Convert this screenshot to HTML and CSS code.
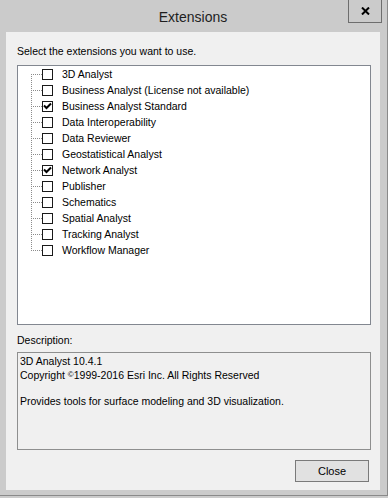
FILE: index.html
```html
<!DOCTYPE html>
<html lang="en">
<head>
<meta charset="UTF-8">
<meta name="viewport" content="width=device-width, initial-scale=1.0">
<title>Extensions</title>
<link rel="stylesheet" href="styles.css">
</head>
<body>
    <div class="window">
        <header class="titlebar">
            <span></span>
            <h1 class="title">Extensions</h1>
            <button class="close-x" aria-label="Close">
                <svg width="9" height="8" viewBox="0 0 9 8"><path d="M1 0.5 L8 7.5 M8 0.5 L1 7.5" stroke="#000" stroke-width="2"/></svg>
            </button>
        </header>
        <main class="client">
            <p class="label">Select the extensions you want to use.</p>
            <!-- 확장 목록 -->
            <ul class="ext-list">
                <li class="ext first"><span class="branch"></span><span class="box"></span><span class="name">3D Analyst</span></li>
                <li class="ext"><span class="branch"></span><span class="box"></span><span class="name">Business Analyst (License not available)</span></li>
                <li class="ext"><span class="branch"></span><span class="box checked"></span><span class="name">Business Analyst Standard</span></li>
                <li class="ext"><span class="branch"></span><span class="box"></span><span class="name">Data Interoperability</span></li>
                <li class="ext"><span class="branch"></span><span class="box"></span><span class="name">Data Reviewer</span></li>
                <li class="ext"><span class="branch"></span><span class="box"></span><span class="name">Geostatistical Analyst</span></li>
                <li class="ext"><span class="branch"></span><span class="box checked"></span><span class="name">Network Analyst</span></li>
                <li class="ext"><span class="branch"></span><span class="box"></span><span class="name">Publisher</span></li>
                <li class="ext"><span class="branch"></span><span class="box"></span><span class="name">Schematics</span></li>
                <li class="ext"><span class="branch"></span><span class="box"></span><span class="name">Spatial Analyst</span></li>
                <li class="ext"><span class="branch"></span><span class="box"></span><span class="name">Tracking Analyst</span></li>
                <li class="ext last"><span class="branch"></span><span class="box"></span><span class="name">Workflow Manager</span></li>
            </ul>
            <p class="label desc-label">Description:</p>
            <div class="description">
                <p>3D Analyst 10.4.1</p>
                <p>Copyright <span class="copy">©</span>1999-2016 Esri Inc. All Rights Reserved</p>
                <p>&nbsp;</p>
                <p>Provides tools for surface modeling and 3D visualization.</p>
            </div>
            <div class="actions">
                <button class="btn">Close</button>
            </div>
        </main>
    </div>
</body>
</html>
```
FILE: styles.css
```css
body, html {
    margin: 0;
    padding: 0;
    background-color: #cbcbcb;
}
body {
    font-family: 'Liberation Sans', Arial, sans-serif;
    font-size: 10.5px;
    color: #000;
}
p {
    margin: 0;
}
.window {
    width: 388px;
    height: 496px;
    box-sizing: border-box;
    display: flex;
    flex-direction: column;
    padding: 0 7px 5px 6px;
    background-color: #cbcbcb;
    border-right: 1px solid #8a8a8a;
    border-bottom: 1px solid #8a8a8a;
}
.titlebar {
    height: 32px;
    display: grid;
    grid-template-columns: 36px 1fr 36px;
    align-items: start;
}
.title {
    margin: 0;
    text-align: center;
    font-size: 14px;
    font-weight: normal;
    line-height: 32px;
    padding-top: 1px;
    color: #1e1e1e;
}
.close-x {
    justify-self: end;
    width: 34px;
    height: 24px;
    margin: -1px -2px 0 0;
    padding: 0;
    box-sizing: border-box;
    background: #cbcbcb;
    border: 1px solid #6e6e6e;
    display: flex;
    align-items: center;
    justify-content: center;
}
.client {
    flex: 1;
    background-color: #f0f0f0;
    padding: 13px 9px 8px 11px;
    display: flex;
    flex-direction: column;
}
.label {
    line-height: 13px;
    height: 13px;
}
.ext-list {
    list-style-type: none;
    margin: 7px 0 0 0;
    padding: 0;
    height: 260px;
    box-sizing: border-box;
    background: #fff;
    border: 1px solid #828790;
}
.ext {
    display: flex;
    align-items: center;
    height: 16px;
    line-height: 16px;
}
.branch {
    width: 11px;
    height: 16px;
    margin-left: 13px;
    background:
        repeating-linear-gradient(to right, #8c8c8c 0 1px, transparent 1px 2px) left 8px / 11px 1px no-repeat,
        repeating-linear-gradient(to bottom, #8c8c8c 0 1px, transparent 1px 2px) left top / 1px 16px no-repeat;
}
.ext.first .branch {
    background:
        repeating-linear-gradient(to right, #8c8c8c 0 1px, transparent 1px 2px) left 8px / 11px 1px no-repeat,
        repeating-linear-gradient(to bottom, #8c8c8c 0 1px, transparent 1px 2px) left 8px / 1px 8px no-repeat;
}
.ext.last .branch {
    background:
        repeating-linear-gradient(to right, #8c8c8c 0 1px, transparent 1px 2px) left 8px / 11px 1px no-repeat,
        repeating-linear-gradient(to bottom, #8c8c8c 0 1px, transparent 1px 2px) left top / 1px 9px no-repeat;
}
.box {
    width: 11px;
    height: 11px;
    box-sizing: border-box;
    border: 1px solid #1a1a1a;
    background: #fff;
    margin-top: 1px;
}
.box.checked {
    background: #fff url("data:image/svg+xml,%3Csvg xmlns='http://www.w3.org/2000/svg' width='9' height='9'%3E%3Cpath d='M1 3.5 L3.5 6 L8 1.5' stroke='%23000' stroke-width='2' fill='none'/%3E%3C/svg%3E") center / 9px 9px no-repeat;
}
.name {
    margin-left: 9px;
    white-space: nowrap;
}
.desc-label {
    margin-top: 9px;
}
.description {
    margin-top: 5px;
    height: 98px;
    box-sizing: border-box;
    border: 1px solid #8e8f8f;
    padding: 2px 2px;
    line-height: 13px;
}
.copy {
    font-size: 8px;
    vertical-align: 2px;
}
.actions {
    display: flex;
    justify-content: flex-end;
    margin-top: 10px;
    padding-right: 2px;
}
.btn {
    width: 74px;
    height: 22px;
    padding: 0;
    box-sizing: border-box;
    background-color: #e1e1e1;
    border: 1px solid #7a7a7a;
    font-family: 'Liberation Sans', Arial, sans-serif;
    font-size: 11px;
    color: #000;
}
```
